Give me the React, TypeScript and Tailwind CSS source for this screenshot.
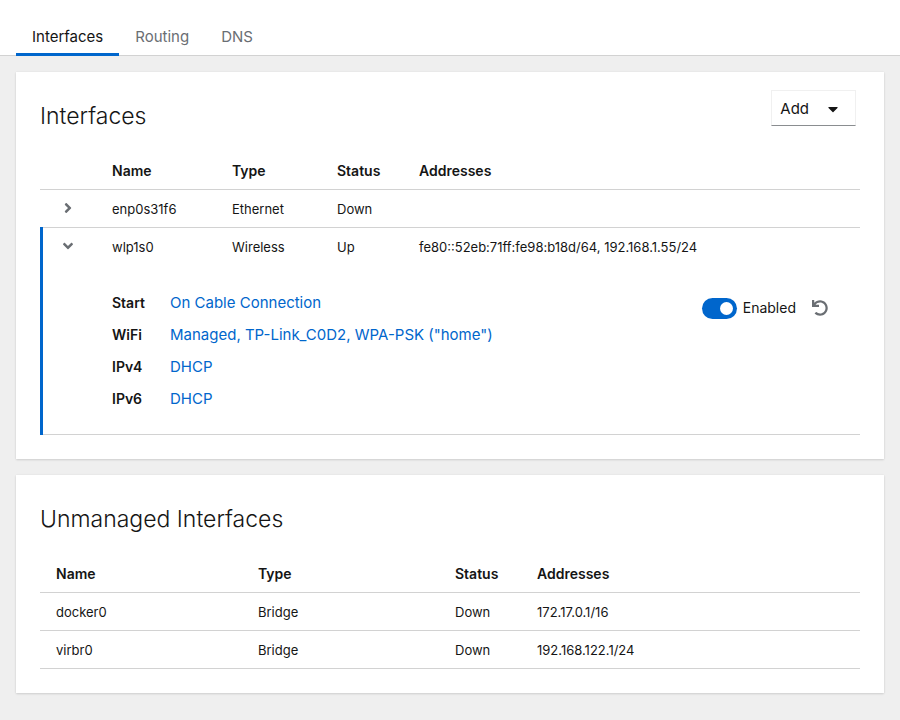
import { useState } from "react";
import { FaAngleDown, FaAngleRight, FaCaretDown, FaUndo } from "react-icons/fa";
import type { ReactNode } from "react";

const tabs = ["Interfaces", "Routing", "DNS"];

const details = [
  { label: "Start", value: "On Cable Connection" },
  { label: "WiFi", value: 'Managed, TP-Link_C0D2, WPA-PSK ("home")' },
  { label: "IPv4", value: "DHCP" },
  { label: "IPv6", value: "DHCP" },
];

const unmanaged = [
  { name: "docker0", type: "Bridge", status: "Down", addresses: "172.17.0.1/16" },
  { name: "virbr0", type: "Bridge", status: "Down", addresses: "192.168.122.1/24" },
];

const columns = ["Name", "Type", "Status", "Addresses"];

function Card({ title, action, children }: { title: string; action?: ReactNode; children: ReactNode }) {
  return (
    <section className="bg-white px-6 pb-6 shadow-[0_1px_2px_rgba(3,3,3,0.12),0_0_2px_rgba(3,3,3,0.06)]">
      <div className="flex items-start justify-between">
        <h2 className="pt-[26px] pb-[18px] text-[23px] leading-9 font-light text-[#151515]">{title}</h2>
        {action}
      </div>
      {children}
    </section>
  );
}

function HeadCell({ children }: { children?: ReactNode }) {
  return (
    <th scope="col" className="h-[38px] border-b border-[#d2d2d2] px-4 text-left text-sm font-semibold">
      {children}
    </th>
  );
}

function Cell({ children, line = true }: { children?: ReactNode; line?: boolean }) {
  return (
    <td
      className={
        line
          ? "h-[38px] border-b border-[#d2d2d2] px-4 text-[13px] whitespace-nowrap"
          : "h-[38px] px-4 text-[13px] whitespace-nowrap"
      }
    >
      {children}
    </td>
  );
}

export default function App() {
  const [enabled, setEnabled] = useState(true);

  return (
    <div className="min-h-screen bg-[#efefef] font-['Inter','Open_Sans',sans-serif] text-[#151515]">
      <nav className="flex border-b border-[#d2d2d2] bg-white px-4 pt-[18px]">
        {tabs.map((tab, i) => (
          <button
            key={tab}
            type="button"
            className={
              i === 0
                ? "-mb-px h-[38px] border-b-[3px] border-[#0066cc] px-4 pt-0.5 text-[15px] leading-6"
                : "-mb-px h-[38px] border-b-[3px] border-transparent px-4 pt-0.5 text-[15px] leading-6 text-[#6a6e73]"
            }
          >
            {tab}
          </button>
        ))}
      </nav>

      <main className="flex flex-col gap-4 p-4">
        <Card
          title="Interfaces"
          action={
            <button
              type="button"
              className="mt-[18px] mr-1 flex h-9 items-center gap-4 border border-[#f0f0f0] border-b-[#8a8d90] pt-0.5 pr-3.5 pl-2 text-[15px]"
            >
              Add
              <FaCaretDown className="h-4 w-4" aria-hidden="true" />
            </button>
          }
        >
          <table className="w-full table-fixed border-separate border-spacing-0 text-sm leading-5">
            <colgroup>
              <col className="w-14" />
              <col className="w-[120px]" />
              <col className="w-[105px]" />
              <col className="w-[82px]" />
              <col />
            </colgroup>
            <thead>
              <tr>
                <td className="h-[38px] border-b border-[#d2d2d2]" />
                {columns.map((column) => (
                  <HeadCell key={column}>{column}</HeadCell>
                ))}
              </tr>
            </thead>
            <tbody>
              <tr>
                <td className="h-[38px] border-b border-[#d2d2d2] pb-0.5">
                  <button type="button" aria-label="Show enp0s31f6" className="flex w-full justify-center text-[#6a6e73]">
                    <FaAngleRight className="h-4 w-4" />
                  </button>
                </td>
                <Cell>enp0s31f6</Cell>
                <Cell>Ethernet</Cell>
                <Cell>Down</Cell>
                <Cell />
              </tr>
            </tbody>
            <tbody className="relative before:absolute before:-top-px before:bottom-0 before:left-0 before:w-[3px] before:bg-[#0066cc]">
              <tr>
                <td className="h-[38px] pb-0.5">
                  <button type="button" aria-label="Hide wlp1s0" className="flex w-full justify-center text-[#6a6e73]">
                    <FaAngleDown className="h-4 w-4" />
                  </button>
                </td>
                <Cell line={false}>wlp1s0</Cell>
                <Cell line={false}>Wireless</Cell>
                <Cell line={false}>Up</Cell>
                <Cell line={false}>fe80::52eb:71ff:fe98:b18d/64, 192.168.1.55/24</Cell>
              </tr>
              <tr>
                <td className="border-b border-[#d2d2d2]" />
                <td colSpan={4} className="border-b border-[#d2d2d2] px-4 pt-[21px] pb-[19px]">
                  <div className="flex items-start justify-between">
                    <dl className="grid grid-cols-[58px_auto] leading-8">
                      {details.map(({ label, value }) => (
                        <div key={label} className="contents">
                          <dt className="font-semibold">{label}</dt>
                          <dd className="text-[15px]">
                            <a href="#" className="text-[#0066cc]">{value}</a>
                          </dd>
                        </div>
                      ))}
                    </dl>
                    <div className="mr-4 flex h-[42px] items-center gap-4">
                      <label className="flex items-center gap-1.5">
                        <input
                          type="checkbox"
                          role="switch"
                          checked={enabled}
                          onChange={() => setEnabled(!enabled)}
                          className="relative h-[21px] w-[35px] appearance-none rounded-full bg-[#8a8d90] before:absolute before:top-1 before:left-1 before:h-[13px] before:w-[13px] before:rounded-full before:bg-white checked:bg-[#0066cc] checked:before:left-[18px]"
                        />
                        Enabled
                      </label>
                      <button type="button" aria-label="Reset" className="text-[#6a6e73]">
                        <FaUndo className="h-4 w-4" />
                      </button>
                    </div>
                  </div>
                </td>
              </tr>
            </tbody>
          </table>
        </Card>

        <Card title="Unmanaged Interfaces">
          <table className="w-full table-fixed border-separate border-spacing-0 text-sm leading-5">
            <colgroup>
              <col className="w-[202px]" />
              <col className="w-[197px]" />
              <col className="w-[82px]" />
              <col />
            </colgroup>
            <thead>
              <tr>
                {columns.map((column) => (
                  <HeadCell key={column}>{column}</HeadCell>
                ))}
              </tr>
            </thead>
            <tbody>
              {unmanaged.map((row) => (
                <tr key={row.name}>
                  <Cell>{row.name}</Cell>
                  <Cell>{row.type}</Cell>
                  <Cell>{row.status}</Cell>
                  <Cell>{row.addresses}</Cell>
                </tr>
              ))}
            </tbody>
          </table>
        </Card>
      </main>
    </div>
  );
}
